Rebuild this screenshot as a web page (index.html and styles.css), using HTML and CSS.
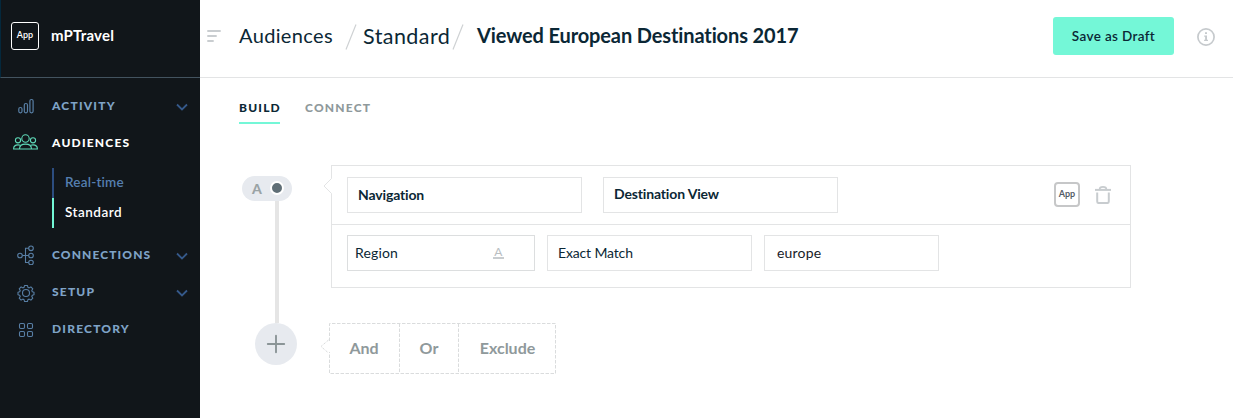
FILE: index.html
```html
<!DOCTYPE html>
<html lang="en">
<head>
<meta charset="utf-8">
<title>Viewed European Destinations 2017</title>
<link rel="stylesheet" href="styles.css">
</head>
<body>
<div class="app">
  <aside class="sidebar">
    <div class="brand">
      <span class="brand-badge">App</span>
      <span class="brand-name">mPTravel</span>
    </div>
    <nav class="nav">
      <a class="nav-item">
        <svg class="nav-icon" width="26" height="20" viewBox="0 0 26 20"><g fill="none" stroke="currentColor" stroke-width="1.200"><rect x="5.800" y="11.500" width="3.200" height="5.300" rx="1.500"/><rect x="11.300" y="7.500" width="3.200" height="9.300" rx="1.500"/><rect x="16.900" y="3.500" width="3.200" height="13.300" rx="1.500"/></g></svg>
        <span class="nav-label">ACTIVITY</span>
        <svg class="chevron" width="12" height="8" viewBox="0 0 12 8"><path d="M1 1.500 6 6.500 11 1.500" fill="none" stroke="currentColor" stroke-width="1.800"/></svg>
      </a>
      <a class="nav-item active">
        <svg class="nav-icon" width="26" height="20" viewBox="0 0 26 20"><g fill="none" stroke="currentColor" stroke-width="1.100"><circle cx="12.500" cy="5.500" r="3.700"/><circle cx="5" cy="7.300" r="2.600"/><circle cx="20" cy="7.300" r="2.600"/><path d="M6.500 16C6.500 12.300 9 11.100 12.500 11.100S18.500 12.300 18.500 16Z"/><path d="M6 16H.6C.6 13.100 2.200 11.900 5 11.900c1 0 1.700.1 2.300.4M19 16h5.400c0-2.900-1.600-4.100-4.400-4.100-1 0-1.700.1-2.300.4"/></g></svg>
        <span class="nav-label">AUDIENCES</span>
      </a>
      <div class="subnav">
        <a class="sub-item">Real-time</a>
        <a class="sub-item current">Standard</a>
      </div>
      <a class="nav-item">
        <svg class="nav-icon" width="26" height="20" viewBox="0 0 26 20"><g fill="none" stroke="currentColor" stroke-width="1.100"><circle cx="7" cy="10.500" r="2.300"/><circle cx="18" cy="3.300" r="2.300"/><circle cx="18" cy="10.500" r="2.300"/><circle cx="18" cy="17.500" r="2.300"/><path d="M9.300 10.500h6.400M15.700 3.300h-3.200v14.200h3.200"/></g></svg>
        <span class="nav-label t-connections">CONNECTIONS</span>
        <svg class="chevron" width="12" height="8" viewBox="0 0 12 8"><path d="M1 1.500 6 6.500 11 1.500" fill="none" stroke="currentColor" stroke-width="1.800"/></svg>
      </a>
      <a class="nav-item">
        <svg class="nav-icon" width="26" height="20" viewBox="0 0 26 20"><g fill="none" stroke="currentColor" stroke-width="1.100" stroke-linejoin="round"><circle cx="13" cy="11" r="3.500"/><path d="M11.500 3.500h3l.4 1.800 1.300.6 1.700-1 1.900 1.900-1 1.700.5 1.300 1.700.4v2.600l-1.700.4-.5 1.300 1 1.700-1.900 1.900-1.700-1-1.300.6-.4 1.800h-3l-.4-1.800-1.300-.6-1.700 1-1.900-1.900 1-1.700-.5-1.300L5 12.800v-2.600l1.700-.4.5-1.300-1-1.700 1.900-1.900 1.700 1 1.300-.6Z"/></g></svg>
        <span class="nav-label">SETUP</span>
        <svg class="chevron" width="12" height="8" viewBox="0 0 12 8"><path d="M1 1.500 6 6.500 11 1.500" fill="none" stroke="currentColor" stroke-width="1.800"/></svg>
      </a>
      <a class="nav-item">
        <svg class="nav-icon" width="26" height="20" viewBox="0 0 26 20"><g fill="none" stroke="currentColor" stroke-width="1.100"><rect x="6.500" y="4.500" width="5" height="5" rx="1.200"/><rect x="14.500" y="4.500" width="5" height="5" rx="1.200"/><rect x="6.500" y="12.500" width="5" height="5" rx="1.200"/><rect x="14.500" y="12.500" width="5" height="5" rx="1.200"/></g></svg>
        <span class="nav-label">DIRECTORY</span>
      </a>
    </nav>
  </aside>

  <main class="main">
    <header class="header">
      <svg class="menu" width="15" height="13" viewBox="0 0 15 13"><path d="M2 1h12M2 6h8M2 11h5" fill="none" stroke="#c9cdd0" stroke-width="1.900" stroke-linecap="round"/></svg>
      <span class="crumb crumb-audiences">Audiences</span>
      <svg class="slash" width="12" height="26" viewBox="0 0 12 26"><path d="M1 25.500 11 .5" stroke="#cfd2d4" stroke-width="1.200"/></svg>
      <span class="crumb crumb-standard">Standard</span>
      <svg class="slash" width="12" height="26" viewBox="0 0 12 26"><path d="M1 25.500 11 .5" stroke="#cfd2d4" stroke-width="1.200"/></svg>
      <h1 class="title">Viewed European Destinations 2017</h1>
      <button class="save">Save as Draft</button>
      <svg class="info" width="18" height="18" viewBox="0 0 18 18"><circle cx="9" cy="9" r="8.100" fill="none" stroke="#c6cacd" stroke-width="1.700"/><path d="M8 4.300h2v1.800H8zM7.200 7.500H10v4.300h1v1.300H7.100v-1.300h1V8.700h-.9z" fill="#c6cacd"/></svg>
    </header>

    <div class="tabs">
      <a class="tab selected">BUILD</a>
      <a class="tab">CONNECT</a>
    </div>

    <section class="builder">
      <div class="rail">
        <div class="pill"><span class="pill-letter">A</span><span class="pill-dot"></span></div>
        <div class="rail-line"></div>
        <div class="add"><svg width="20" height="20" viewBox="0 0 20 20"><path d="M10 1.800v16.400M1.800 10h16.400" stroke="#8b9597" stroke-width="1.900" stroke-linecap="round"/></svg></div>
      </div>
      <div class="rules">
        <div class="card">
          <svg class="pointer" width="9" height="16" viewBox="0 0 9 16"><path d="M9 .5H8.500L1 8l7.500 7.500H9Z" fill="#fff"/><path d="M8.500 .5 1 8l7.500 7.500" fill="none" stroke="#e3e4e5"/></svg>
          <div class="row row-event">
            <div class="field f-nav">Navigation</div>
            <div class="field f-dest">Destination View</div>
            <span class="app-badge">App</span>
            <svg class="trash" width="16" height="18" viewBox="0 0 16 18"><g fill="none" stroke="#c8cccf"><path d="M0 3.900h16" stroke-width="2"/><path d="M4.600 3.200c0-1.500 1-2.300 3.400-2.300s3.400.8 3.400 2.300" stroke-width="1.600"/><path d="M2.200 6.500v8.700c0 1.200.6 1.900 1.800 1.900h8c1.200 0 1.800-.7 1.800-1.900V6.500" stroke-width="2"/></g></svg>
          </div>
          <div class="row row-condition">
            <div class="field f-region">Region<span class="type-mark">A</span></div>
            <div class="field f-match">Exact Match</div>
            <div class="field f-value">europe</div>
          </div>
        </div>
        <div class="joins">
          <svg class="join-box" width="236" height="51" viewBox="0 0 236 51"><g fill="none" stroke="#dadcdd" stroke-dasharray="3.500 1.500"><path d="M9.500 18V.5h226v50H9.500V29"/><path d="M79.500 .5v50M138.500 .5v50"/><path d="M8.500 17 1 23.500l7.500 6.500" stroke-dasharray="2.500 1.500"/></g></svg>
          <span class="join j-and">And</span>
          <span class="join j-or">Or</span>
          <span class="join j-ex">Exclude</span>
        </div>
      </div>
    </section>
  </main>
</div>
</body>
</html>
```
FILE: styles.css
```css
* { box-sizing: border-box; }
body { margin: 0; font-family: Lato, "Open Sans", sans-serif; font-variant-ligatures: none; color: #0b2735; background: #fff; }
.app { display: flex; width: 1233px; height: 418px; overflow: hidden; }

.sidebar { width: 200px; flex: none; background: #11161a; }
.brand { display: flex; align-items: center; height: 78px; padding: 0 0 6px 10px; border-bottom: 1px solid #43535f; border-left: 1px solid #04283c; }
.brand-badge { width: 28px; height: 28px; border: 1px solid #fff; border-radius: 3px; color: #fff; font-size: 9px; font-weight: 600; line-height: 24px; text-align: center; }
.brand-name { margin: -1px 0 0 12px; color: #fff; font-size: 15px; font-weight: 700; letter-spacing: 0.2px; }

.nav { padding-top: 9px; }
.nav-item { display: flex; align-items: center; height: 37px; padding: 0 13px; color: #587fa5; }
.nav-label { margin-left: 13px; color: #7fa3c7; font-size: 12px; font-weight: 900; letter-spacing: 1.2px; }
.t-connections { letter-spacing: 1.1px; }
.chevron { margin: 3px -1px 0 auto; color: #35598a; }
.active { color: #5fd9b8; }
.active .nav-label { color: #fff; }
.subnav { margin: 7px 0 8px 52px; }
.sub-item { display: flex; align-items: center; height: 30px; padding: 0 0 3px 11px; border-left: 2px solid #2c4d80; color: #557fb0; font-size: 13.5px; font-weight: 600; letter-spacing: 0.2px; }
.sub-item.current { padding-bottom: 2px; border-color: #72f7d5; color: #fff; letter-spacing: 0.5px; }

.main { flex: 1; }
.header { display: flex; align-items: center; height: 78px; padding: 0 18px 5px 6px; border-bottom: 1px solid #e3e4e5; }
.menu { margin-top: 1px; }
.crumb { margin-top: -2px; font-size: 20px; letter-spacing: 0.35px; white-space: nowrap; }
.crumb-audiences { width: 93px; margin-left: 18px; }
.crumb-standard { width: 88px; margin: 0 0 0 6px; font-size: 21.5px; letter-spacing: 0.45px; }
.slash { margin-top: 2px; }
.crumb-audiences + .slash { margin-left: 13px; }
.crumb-standard + .slash { margin-left: 1px; }
.title { margin: -2px auto 0 13px; font-size: 20px; font-weight: 700; letter-spacing: -0.12px; white-space: nowrap; }
.save { width: 121px; height: 38px; padding: 0; border: 0; border-radius: 3px; background: #74f7d7; color: #0b2735; font: 600 13.5px Lato, sans-serif; letter-spacing: 0.35px; }
.info { margin-left: 23px; margin-top: 2px; }

.tabs { display: flex; gap: 25px; height: 46px; padding-left: 39px; }
.tab { display: flex; align-items: center; height: 46px; padding-top: 15px; border-bottom: 2px solid transparent; color: #8f999b; font-size: 12px; font-weight: 900; letter-spacing: 1.2px; }
.tab.selected { width: 41px; border-color: #74f7d7; color: #0b2735; }

.builder { display: flex; padding: 41px 0 0 42px; }
.rail { width: 87px; padding-top: 11px; }
.pill { display: flex; align-items: center; justify-content: space-between; width: 50px; height: 25px; padding: 0 8px 1px 10px; border-radius: 13px; background: #e7eaef; }
.pill-letter { color: #9aa3a5; font-size: 14px; font-weight: 900; }
.pill-dot { width: 14px; height: 14px; border: 2px solid #fff; border-radius: 50%; background: #5f6e76; }
.rail-line { width: 4px; height: 122px; margin-left: 33px; background: #e5e5e5; }
.add { display: flex; align-items: center; justify-content: center; width: 42px; height: 42px; margin-left: 13px; border-radius: 50%; background: #e7eaef; }

.card { position: relative; width: 800px; height: 123px; margin-left: 2px; border: 1px solid #e3e4e5; }
.pointer { position: absolute; left: -9px; top: 12px; }
.row { display: flex; padding-left: 15px; }
.row-event { height: 59px; padding-top: 11px; border-bottom: 1px solid #e3e4e5; }
.row-condition { gap: 12px; padding-top: 10px; }
.field { display: flex; align-items: center; height: 36px; padding-bottom: 2px; border: 1px solid #e3e4e5; font-size: 14px; white-space: nowrap; }
.f-nav { width: 235px; padding-left: 10px; font-weight: 700; letter-spacing: -0.15px; }
.f-dest { width: 235px; margin-left: 21px; padding: 0 0 4px 10px; font-weight: 700; letter-spacing: -0.15px; }
.f-region { width: 188px; padding-left: 7px; border-color: #dcdedf; letter-spacing: 0.15px; }
.f-match { width: 205px; padding-left: 10px; letter-spacing: -0.15px; }
.f-value { width: 175px; padding-left: 12px; color: #182128; letter-spacing: 0.2px; }
.type-mark { width: 11px; height: 13px; margin: 0 30px 0 auto; border-bottom: 2px solid #c8cccf; color: #b9bec2; font-size: 12px; line-height: 11px; text-align: center; }
.app-badge { width: 26px; height: 25px; margin: 5px 0 0 216px; border: 2px solid #c6c7c8; border-radius: 4px; color: #535c66; font-size: 9px; font-weight: 700; line-height: 20px; text-align: center; }
.trash { margin: 9px 0 0 15px; }

.joins { position: relative; display: flex; width: 227px; height: 51px; margin-top: 35px; }
.join-box { position: absolute; left: -9px; top: 0; }
.join { display: flex; align-items: center; justify-content: center; padding-bottom: 2px; color: #8f999b; font-size: 16px; font-weight: 700; }
.j-and { width: 70px; }
.j-or { width: 60px; }
.j-ex { width: 97px; }
```
